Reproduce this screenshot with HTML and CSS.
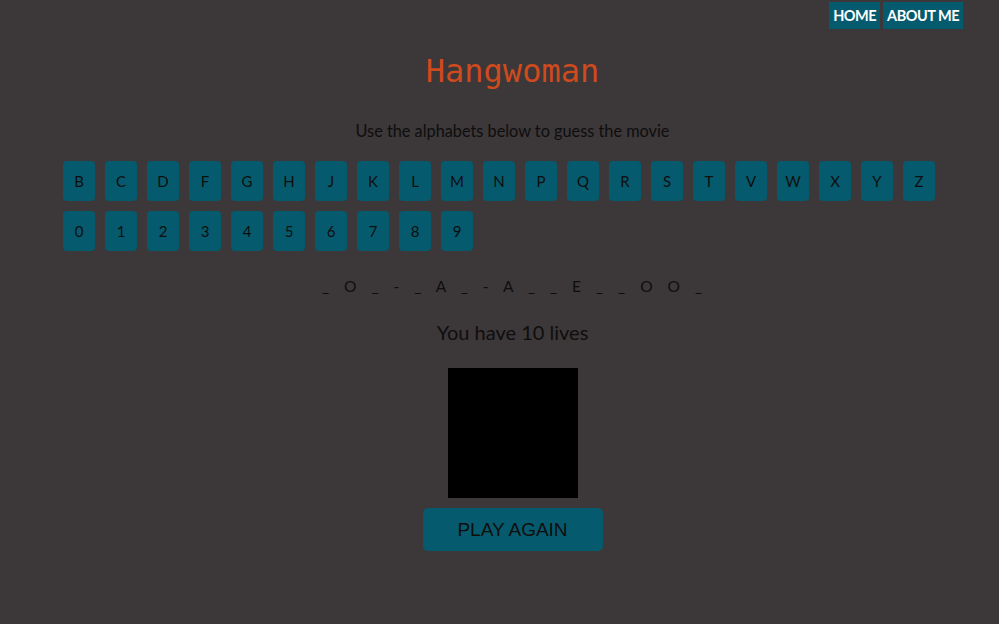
FILE: index.html
```html
<!DOCTYPE html>
<html>
<head>
<meta charset="utf-8">
<link rel="stylesheet" href="styles.css">
</head>
<body>
<nav class="nav">
  <a class="nav-link" href="#">HOME</a>
  <a class="nav-link" href="#">ABOUT ME</a>
</nav>
<main class="game">
  <h1 class="title">Hangwoman</h1>
  <p class="hint">Use the alphabets below to guess the movie</p>
  <div class="keys">
    <button class="key">B</button><button class="key">C</button><button class="key">D</button><button class="key">F</button><button class="key">G</button><button class="key">H</button><button class="key">J</button><button class="key">K</button><button class="key">L</button><button class="key">M</button><button class="key">N</button><button class="key">P</button><button class="key">Q</button><button class="key">R</button><button class="key">S</button><button class="key">T</button><button class="key">V</button><button class="key">W</button><button class="key">X</button><button class="key">Y</button><button class="key">Z</button>
    <button class="key">0</button><button class="key">1</button><button class="key">2</button><button class="key">3</button><button class="key">4</button><button class="key">5</button><button class="key">6</button><button class="key">7</button><button class="key">8</button><button class="key">9</button>
  </div>
  <div class="center">
    <p class="word">_ O _ - _ A _ - A _ _ E _ _ O O _</p>
    <p class="lives">You have 10 lives</p>
    <div class="canvas"></div>
    <button class="again">PLAY AGAIN</button>
  </div>
</main>
</body>
</html>
```
FILE: styles.css
```css
* { box-sizing: border-box; }
body {
  margin: 0;
  background: #3c3738;
  font-family: Lato, "Open Sans", sans-serif;
  color: #0e0e0e;
}
.nav {
  display: flex;
  justify-content: flex-end;
  gap: 3px;
  padding: 2px 36px 0 0;
}
.nav-link {
  display: block;
  background: #065a6d;
  color: #fff;
  font-weight: bold;
  font-size: 14.5px;
  line-height: 27px;
  padding: 0 4px;
  text-decoration: none;
  letter-spacing: -0.5px;
}
.title {
  margin: 22px 0 0 26px;
  text-align: center;
  font-family: "DejaVu Sans Mono", monospace;
  font-weight: normal;
  font-size: 32px;
  line-height: 40px;
  color: #cf4a1d;
}
.hint {
  margin: 30px 0 0 26px;
  text-align: center;
  font-size: 16.3px;
  line-height: 20px;
}
.keys {
  display: flex;
  flex-wrap: wrap;
  gap: 10px;
  margin: 20px 63px 0 63px;
}
.key {
  width: 32px;
  height: 40px;
  border: none;
  border-radius: 4px;
  background: #065a6d;
  color: #0e0e0e;
  font-family: Lato, "Open Sans", sans-serif;
  font-size: 15px;
  padding: 0;
}
.center {
  display: flex;
  flex-direction: column;
  align-items: center;
  padding-left: 26px;
}
.word {
  margin: 25px 0 0 0;
  font-size: 15.5px;
  line-height: 20px;
  word-spacing: 9px;
  letter-spacing: 1px;
}
.lives {
  margin: 23px 0 0 0;
  font-size: 20px;
  line-height: 26px;
}
.canvas {
  width: 130px;
  height: 130px;
  background: #000;
  margin-top: 23px;
}
.again {
  margin-top: 10px;
  width: 180px;
  height: 43px;
  border: none;
  border-radius: 5px;
  background: #065a6d;
  color: #0e0e0e;
  font-family: "Liberation Sans", Arial, sans-serif;
  font-size: 19px;
  padding: 0;
}
```
